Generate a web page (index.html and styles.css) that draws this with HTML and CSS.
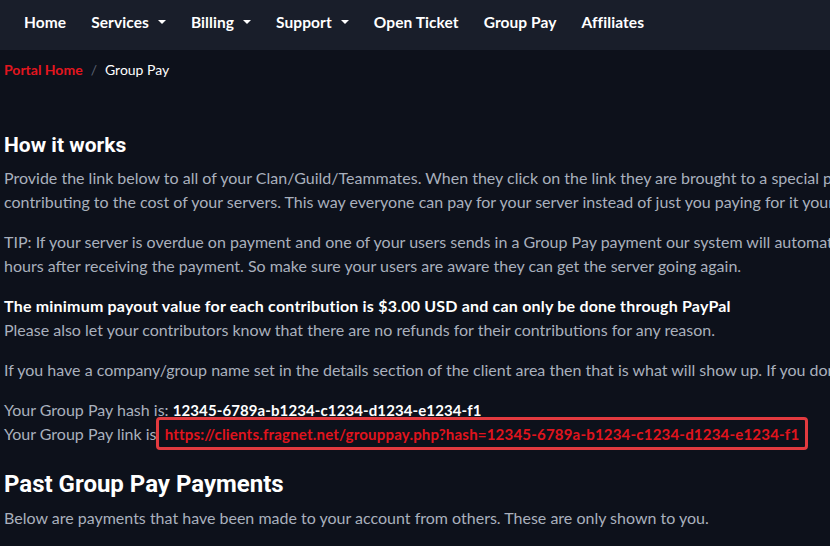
FILE: index.html
```html
<!DOCTYPE html>
<html lang="en">
<head>
<meta charset="utf-8">
<title>Group Pay</title>
<link rel="stylesheet" href="styles.css">
</head>
<body>
<nav class="topnav">
  <ul class="menu">
    <li class="item">Home</li>
    <li class="item dd">Services<span class="caret"></span></li>
    <li class="item dd">Billing<span class="caret"></span></li>
    <li class="item dd">Support<span class="caret"></span></li>
    <li class="item">Open Ticket</li>
    <li class="item">Group Pay</li>
    <li class="item">Affiliates</li>
  </ul>
</nav>
<main class="page">
  <div class="crumbs"><a class="crumb-link">Portal Home</a><span class="sep">/</span><span class="crumb-cur">Group Pay</span></div>
  <h2 class="h-works">How it works</h2>
  <p class="txt">Provide the link below to all of your Clan/Guild/Teammates. When they click on the link they are brought to a special page where they can contribute towards<br>contributing to the cost of your servers. This way everyone can pay for your server instead of just you paying for it yourself.</p>
  <p class="txt">TIP: If your server is overdue on payment and one of your users sends in a Group Pay payment our system will automatically unsuspend your server within 24<br>hours after receiving the payment. So make sure your users are aware they can get the server going again.</p>
  <p class="txt"><strong class="strong">The minimum payout value for each contribution is $3.00 USD and can only be done through PayPal</strong><br>Please also let your contributors know that there are no refunds for their contributions for any reason.</p>
  <p class="txt">If you have a company/group name set in the details section of the client area then that is what will show up. If you don't have one set then your name will show up instead.</p>
  <p class="txt">Your Group Pay hash is: <strong class="hash">12345-6789a-b1234-c1234-d1234-e1234-f1</strong><br>Your Group Pay link is <a class="paylink">https://clients.fragnet.net/grouppay.php?hash=12345-6789a-b1234-c1234-d1234-e1234-f1</a></p>
  <h2 class="h-past">Past Group Pay Payments</h2>
  <p class="txt">Below are payments that have been made to your account from others. These are only shown to you.</p>
</main>
</body>
</html>
```
FILE: styles.css
```css
html, body {
  margin: 0;
  padding: 0;
  background: #0d111b;
  overflow: hidden;
}
body {
  font-family: Lato, "Liberation Sans", sans-serif;
  color: #a9b0bd;
  width: 830px;
  height: 546px;
}
.topnav {
  background: #191e2a;
  height: 50px;
  box-sizing: border-box;
  padding-top: 12px;
}
.menu {
  list-style: none;
  margin: 0;
  padding: 0 0 0 24px;
  display: flex;
  gap: 25px;
  white-space: nowrap;
}
.item {
  color: #ffffff;
  font-weight: 700;
  font-size: 15.5px;
  letter-spacing: 0.08px;
  line-height: 20px;
  display: flex;
  align-items: center;
}
.caret {
  display: inline-block;
  margin-left: 9px;
  width: 0;
  height: 0;
  border-left: 4px solid transparent;
  border-right: 4px solid transparent;
  border-top: 4px solid #ffffff;
}
.page {
  width: 1300px;
  padding: 9px 4px 0;
}
.crumbs {
  font-size: 14px;
  display: flex;
  align-items: center;
  height: 20px;
}
.crumb-link {
  color: #e3161f;
  font-weight: 700;
}
.sep {
  color: #5b6272;
  margin: 0 8px;
}
.crumb-cur {
  color: #ffffff;
}
.h-works {
  color: #ffffff;
  font-family: Roboto, sans-serif;
  font-weight: 700;
  font-size: 21px;
  line-height: 26px;
  margin: 53px 0 8px;
}
.txt {
  font-size: 16px;
  line-height: 24px;
  margin: 0 0 16px;
  width: 1250px;
  white-space: nowrap;
}
.strong {
  color: #ffffff;
  font-weight: 700;
  letter-spacing: 0.2px;
}
.hash {
  color: #ffffff;
  font-weight: 700;
  font-size: 15px;
  letter-spacing: 0.1px;
}
.paylink {
  color: #e0141d;
  font-weight: 700;
  font-size: 15px;
  letter-spacing: 0.2px;
  border: 3px solid #e23a3f;
  border-radius: 4px;
  padding: 5px 6px 4px;
  margin-left: -5px;
}
.h-past {
  color: #ffffff;
  font-family: Roboto, sans-serif;
  font-weight: 700;
  font-size: 24px;
  line-height: 30px;
  margin: 23px 0 7px;
}
```
